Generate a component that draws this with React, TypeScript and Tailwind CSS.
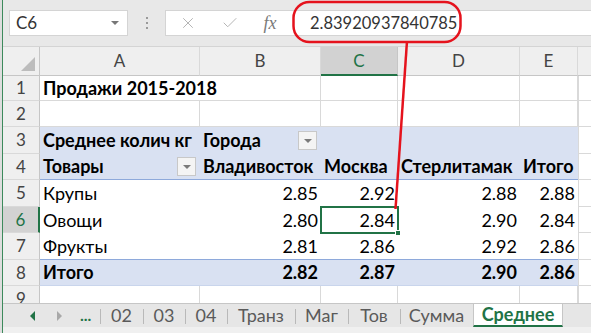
import React from 'react';
import { X, Check } from 'lucide-react';

const COLS = ['w-[160px]', 'w-[121px]', 'w-[77px]', 'w-[122px]', 'w-[58px]'];

type Cell = { text?: string; right?: boolean; bold?: boolean; drop?: boolean; sel?: boolean };

interface RowProps {
  num: number;
  h: string;
  cells: Cell[];
  pivot?: 'blue' | 'white';
  line?: string;
  active?: boolean;
  grid?: boolean;
}

const Dropdown: React.FC = () => (
  <span className="ml-auto mr-[1px] w-[19px] h-[19px] border border-[#c8c8c8] bg-[#f4f4f4] flex items-center justify-center shrink-0">
    <span className="w-0 h-0 border-l-[4px] border-r-[4px] border-t-[4px] border-l-transparent border-r-transparent border-t-[#7a7a7a]" />
  </span>
);

const Row: React.FC<RowProps> = ({ num, h, cells, pivot, line, active, grid }) => {
  const bg = pivot === 'blue' ? 'bg-[#d9e1f2]' : 'bg-white';
  return (
    <div className={`flex ${h} shrink-0`}>
      <div
        className={`w-[37px] shrink-0 flex items-center justify-center text-[17px] border-b border-b-[#d9d9d9] ${
          active
            ? 'bg-[#d2d2d2] text-[#217346] border-r-2 border-r-[#217346]'
            : 'bg-[#efefef] text-[#444] border-r border-r-[#c6c6c6]'
        }`}
      >
        {num}
      </div>
      <div className={`flex ${bg} ${line ?? ''}`}>
        {COLS.map((w, i) => {
          const c = cells[i] ?? {};
          const gl = grid ? 'border-r border-b border-[#d9d9d9]' : '';
          return (
            <div
              key={i}
              className={`${w} shrink-0 relative flex items-center px-[3px] text-[18px] text-black whitespace-nowrap ${gl} ${
                c.right ? 'justify-end' : ''
              } ${c.bold ? 'font-bold' : ''} ${i === 0 && num === 1 ? 'overflow-visible z-10 border-r-0' : ''}`}
            >
              <span>{c.text}</span>
              {c.drop && <Dropdown />}
              {c.sel && (
                <span className="absolute -left-px -top-px -right-px -bottom-px border-2 border-[#217346]">
                  <span className="absolute -right-[4px] -bottom-[4px] w-[6px] h-[6px] bg-[#217346] border border-white" />
                </span>
              )}
            </div>
          );
        })}
      </div>
      <div className="flex-1 bg-white border-l border-b border-[#d9d9d9]" />
    </div>
  );
};

const Tab: React.FC<{ label: string; w: string; sep?: boolean }> = ({ label, w, sep = true }) => (
  <div className={`${w} h-full flex items-center justify-center relative text-[18px] text-[#5a5a5a]`}>
    {sep && <span className="absolute left-0 top-[5px] h-[15px] w-px bg-[#b9b9b9]" />}
    {label}
  </div>
);

export default function App() {
  return (
    <div className="w-[591px] h-[333px] overflow-hidden flex relative bg-[#e8e8e8] font-['Lato','Open_Sans',sans-serif]">
      <div className="w-[2px] bg-[#dedede] shrink-0" />
      <div className="w-px bg-[#3d8a5c] shrink-0" />
      <div className="flex-1 flex flex-col min-w-0">
        {/* formula bar */}
        <div className="h-[46px] shrink-0 flex items-start pt-[10px]">
          <div className="ml-[6px] w-[119px] h-[26px] bg-white border border-[#d4d4d4] flex items-center pl-[6px] pr-[8px] text-[17px] text-[#333]">
            <span>C6</span>
            <span className="ml-auto w-0 h-0 border-l-[4px] border-r-[4px] border-t-[4px] border-l-transparent border-r-transparent border-t-[#777]" />
          </div>
          <div className="w-[37px] h-[26px] flex flex-col items-center justify-center gap-[3px]">
            <span className="w-[2px] h-[2px] bg-[#9a9a9a]" />
            <span className="w-[2px] h-[2px] bg-[#9a9a9a]" />
            <span className="w-[2px] h-[2px] bg-[#9a9a9a]" />
          </div>
          <div className="flex-1 h-[26px] bg-white border border-[#d4d4d4] border-r-0 flex items-center">
            <div className="w-[44px] flex justify-center">
              <X size={18} strokeWidth={1.3} className="text-[#b3b3b3]" />
            </div>
            <div className="w-[40px] flex justify-center">
              <Check size={18} strokeWidth={1.3} className="text-[#b3b3b3]" />
            </div>
            <div className="w-[40px] flex justify-center font-['Liberation_Serif',serif] italic text-[18px] text-[#7a7a7a]">
              fx
            </div>
            <div className="pl-[20px] text-[16.5px] text-[#333]">2.83920937840785</div>
          </div>
        </div>

        {/* column headers */}
        <div className="h-[30px] shrink-0 flex bg-[#efefef] border-t border-[#d4d4d4]">
          <div className="w-[37px] shrink-0 relative border-r border-[#c6c6c6] border-b border-b-[#c6c6c6]">
            <span className="absolute right-[4px] bottom-[4px] w-0 h-0 border-b-[14px] border-l-[14px] border-b-[#bcbcbc] border-l-transparent" />
          </div>
          {['A', 'B', 'C', 'D', 'E'].map((l, i) => (
            <div
              key={l}
              className={`${COLS[i]} shrink-0 flex items-center justify-center text-[17px] border-r ${
                l === 'C'
                  ? 'bg-[#d2d2d2] text-[#217346] border-b-2 border-b-[#217346] border-r-[#c6c6c6]'
                  : 'text-[#444] border-b border-b-[#c6c6c6] border-r-[#d9d9d9]'
              }`}
            >
              {l}
            </div>
          ))}
          <div className="flex-1 border-b border-[#c6c6c6]" />
        </div>

        {/* grid */}
        <div className="h-[227px] shrink-0 overflow-hidden flex flex-col">
          <Row num={1} h="h-[25px]" grid cells={[{ text: 'Продажи 2015-2018', bold: true }]} />
          <Row num={2} h="h-[26px]" grid cells={[]} />
          <Row
            num={3}
            h="h-[27px]"
            pivot="blue"
            cells={[{ text: 'Среднее колич кг', bold: true }, { text: 'Города', bold: true, drop: true }]}
          />
          <Row
            num={4}
            h="h-[26px]"
            pivot="blue"
            line="border-b border-[#8ea9db]"
            cells={[
              { text: 'Товары', bold: true, drop: true },
              { text: 'Владивосток', bold: true },
              { text: 'Москва', bold: true },
              { text: 'Стерлитамак', bold: true },
              { text: 'Итого', bold: true },
            ]}
          />
          <Row
            num={5}
            h="h-[27px]"
            cells={[{ text: 'Крупы' }, { text: '2.85', right: true }, { text: '2.92', right: true }, { text: '2.88', right: true }, { text: '2.88', right: true }]}
          />
          <Row
            num={6}
            h="h-[26px]"
            active
            cells={[{ text: 'Овощи' }, { text: '2.80', right: true }, { text: '2.84', right: true, sel: true }, { text: '2.90', right: true }, { text: '2.84', right: true }]}
          />
          <Row
            num={7}
            h="h-[27px]"
            line="border-b border-[#8ea9db]"
            cells={[{ text: 'Фрукты' }, { text: '2.81', right: true }, { text: '2.86', right: true }, { text: '2.92', right: true }, { text: '2.86', right: true }]}
          />
          <Row
            num={8}
            h="h-[26px]"
            pivot="blue"
            line="border-b border-[#c9d5ec]"
            cells={[
              { text: 'Итого', bold: true },
              { text: '2.82', right: true, bold: true },
              { text: '2.87', right: true, bold: true },
              { text: '2.90', right: true, bold: true },
              { text: '2.86', right: true, bold: true },
            ]}
          />
          <Row num={9} h="h-[26px]" grid cells={[]} />
        </div>

        {/* sheet tabs */}
        <div className="h-[24px] shrink-0 flex items-stretch bg-[#e6e6e6] border-t border-[#c6c6c6]">
          <div className="w-[97px] flex items-center">
            <span className="ml-[27px] w-0 h-0 border-t-[5px] border-b-[5px] border-r-[5px] border-t-transparent border-b-transparent border-r-[#217346]" />
            <span className="ml-[22px] w-0 h-0 border-t-[5px] border-b-[5px] border-l-[5px] border-t-transparent border-b-transparent border-l-[#a8a8a8]" />
            <span className="ml-[18px] text-[16px] text-[#217346] font-bold leading-none pb-[2px]">...</span>
          </div>
          <Tab label="02" w="w-[43px]" />
          <Tab label="03" w="w-[42px]" />
          <Tab label="04" w="w-[42px]" />
          <Tab label="Транз" w="w-[68px]" />
          <Tab label="Маг" w="w-[53px]" />
          <Tab label="Тов" w="w-[52px]" />
          <Tab label="Сумма" w="w-[73px]" />
          <div className="w-[90px] h-full bg-white flex items-center justify-center text-[18px] font-bold text-[#217346] border-b-2 border-[#217346] border-x border-x-[#c6c6c6]">
            Среднее
          </div>
          <div className="flex-1" />
        </div>
        <div className="flex-1 bg-[#f0f0f0]" />
      </div>

      {/* red annotation */}
      <svg className="absolute inset-0 pointer-events-none" width="591" height="333" viewBox="0 0 591 333">
        <rect x="293.5" y="2" width="167" height="40" rx="16" fill="none" stroke="#e5131d" strokeWidth="2.5" />
        <line x1="407" y1="41" x2="395.5" y2="209" stroke="#e5131d" strokeWidth="2.5" />
      </svg>
    </div>
  );
}
